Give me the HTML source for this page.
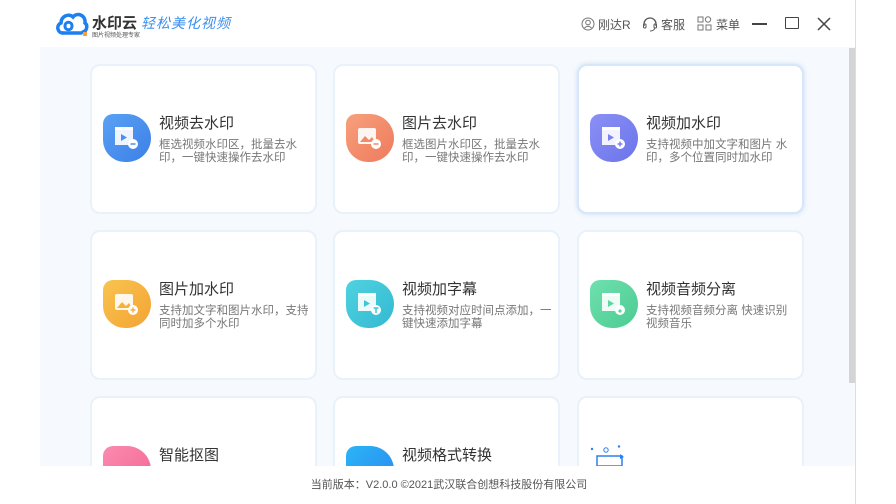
<!DOCTYPE html>
<html><head><meta charset="utf-8"><style>
*{margin:0;padding:0;box-sizing:border-box}
html,body{width:896px;height:504px;overflow:hidden}
body{background:#fff;font-family:"Liberation Sans","Noto Sans CJK SC",sans-serif;position:relative}
.win{position:absolute;left:0;top:0;width:856px;height:504px;background:#fff;border-right:1px solid #ddd;overflow:hidden}
.top{position:absolute;left:0;top:0;width:855px;height:47px;background:#fff}
.content{position:absolute;left:40px;top:47px;width:815px;height:419px;background:#f6f9fd;overflow:hidden}
.scroll{position:absolute;left:849px;top:48px;width:6px;height:335px;background:#d4d4d4}
.card{position:absolute;width:227px;height:150px;background:#fff;border:2px solid #e9f1fb;border-radius:10px}
.card.h{border-color:#d6e7fb;box-shadow:0 0 4px rgba(120,170,240,.35)}
.ic{position:absolute;left:11px;top:48px;width:48px;height:48px;border-radius:10px 24px 24px 22px}
.ic svg{position:absolute;left:10px;top:12px}
.t{position:absolute;left:67px;top:46px;font-size:15px;color:#333}
.d{position:absolute;left:67px;top:73px;width:150px;font-size:11.5px;line-height:13px;color:#777}
.footer{position:absolute;left:20px;top:466px;width:858px;height:38px;background:transparent;text-align:center;font-size:11px;color:#555;line-height:38px}
.fbg{position:absolute;left:0;top:466px;width:855px;height:38px;background:#fff}
.nav{position:absolute;top:16px;font-size:12px;color:#555}
</style></head><body>
<div class="win">
<div class="top">
 <svg style="position:absolute;left:55px;top:11px" width="34" height="26" viewBox="0 0 34 26"><path d="M8 22 C2 22 1 14 6 12 C6 5 14 2 18 6 C22 1 31 4 30 12 C33 14 32 20 28 21" fill="none" stroke="#1e7ff0" stroke-width="3.5" stroke-linecap="round"/><path d="M10 15 C10 10 17 10 17 15 C17 20 10 20 10 15Z" fill="none" stroke="#1e7ff0" stroke-width="3"/><path d="M8 22 H26" stroke="#1e7ff0" stroke-width="3.5" stroke-linecap="round"/><rect x="28" y="21" width="4" height="4" fill="#f4a13a"/></svg>
 <div style="position:absolute;left:92px;top:12px;font-size:15px;font-weight:bold;color:#333">水印云</div>
 <div style="position:absolute;left:92px;top:30px;font-size:6px;color:#555">图片视频处理专家</div>
 <div style="position:absolute;left:141px;top:13px;font-size:14px;color:#3a8ff0;font-style:italic;letter-spacing:1px">轻松美化视频</div>
 <svg style="position:absolute;left:581px;top:17px" width="14" height="14"><circle cx="7" cy="7" r="6" fill="none" stroke="#777"/><circle cx="7" cy="5.5" r="2.3" fill="none" stroke="#777"/><path d="M3.5 11 Q7 7.5 10.5 11" fill="none" stroke="#777"/></svg>
 <div class="nav" style="left:598px">刚达R</div>
 <svg style="position:absolute;left:642px;top:16px" width="16" height="16"><path d="M2 10 V8 A6 6 0 0 1 14 8 V10" fill="none" stroke="#555" stroke-width="1.3"/><rect x="1.5" y="8" width="2.5" height="4" rx="1" fill="none" stroke="#555"/><rect x="12" y="8" width="2.5" height="4" rx="1" fill="none" stroke="#555"/><path d="M13 12 Q12 15 8 15" fill="none" stroke="#555"/></svg>
 <div class="nav" style="left:661px">客服</div>
 <svg style="position:absolute;left:697px;top:16px" width="15" height="15"><rect x="1" y="1" width="5" height="5" fill="none" stroke="#777"/><circle cx="11" cy="3.5" r="2.7" fill="none" stroke="#777"/><rect x="1" y="9" width="5" height="5" fill="none" stroke="#777"/><rect x="9" y="9" width="5" height="5" fill="none" stroke="#777"/></svg>
 <div class="nav" style="left:716px">菜单</div>
 <div style="position:absolute;left:752px;top:23px;width:15px;height:2px;background:#444"></div>
 <div style="position:absolute;left:785px;top:17px;width:14px;height:12px;border:1.5px solid #444;border-radius:1px"></div>
 <svg style="position:absolute;left:817px;top:17px" width="14" height="14"><path d="M1 1 L13 13 M13 1 L1 13" stroke="#444" stroke-width="1.5"/></svg>
</div>
<div class="content">
 <div class="card" style="left:50px;top:17px"><div class="ic" style="background:linear-gradient(135deg,#5aa2f5,#3c7fe6)"><svg width="28" height="24"><rect x="2" y="4" width="18" height="15" fill="#fff" opacity=".9"/><rect x="2" y="1" width="18" height="3" fill="#fff"/><path d="M8 8 L14 11.5 L8 15Z" fill="#4a8ff0"/><circle cx="20" cy="18" r="5" fill="#fff"/><path d="M17.5 18 H22.5" stroke="#4a8ff0" stroke-width="1.5"/></svg></div><div class="t">视频去水印</div><div class="d">框选视频水印区，批量去水印，一键快速操作去水印</div></div>
 <div class="card" style="left:293px;top:17px"><div class="ic" style="background:linear-gradient(135deg,#f7a07c,#ee7a5c)"><svg width="28" height="24"><rect x="2" y="2" width="18" height="16" rx="2" fill="#fff" opacity=".9"/><path d="M4 16 L9 10 L13 14 L16 11 L19 16Z" fill="#f08a6a"/><circle cx="20" cy="18" r="5" fill="#fff"/><path d="M17.5 18 H22.5" stroke="#f08a6a" stroke-width="1.5"/></svg></div><div class="t">图片去水印</div><div class="d">框选图片水印区，批量去水印，一键快速操作去水印</div></div>
 <div class="card h" style="left:537px;top:17px"><div class="ic" style="background:linear-gradient(135deg,#8b90f5,#6b74ea)"><svg width="28" height="24"><rect x="2" y="4" width="18" height="15" fill="#fff" opacity=".9"/><rect x="2" y="1" width="18" height="3" fill="#fff"/><path d="M8 8 L14 11.5 L8 15Z" fill="#7b82f0"/><circle cx="20" cy="18" r="5" fill="#fff"/><path d="M17.5 18 H22.5 M20 15.5 V20.5" stroke="#7b82f0" stroke-width="1.5"/></svg></div><div class="t">视频加水印</div><div class="d">支持视频中加文字和图片 水印，多个位置同时加水印</div></div>
 <div class="card" style="left:50px;top:183px"><div class="ic" style="background:linear-gradient(135deg,#f9c34f,#f3a434)"><svg width="28" height="24"><rect x="2" y="2" width="18" height="16" rx="2" fill="#fff" opacity=".9"/><path d="M4 16 L9 10 L13 14 L16 11 L19 16Z" fill="#f5b03e"/><circle cx="20" cy="18" r="5" fill="#fff"/><path d="M17.5 18 H22.5 M20 15.5 V20.5" stroke="#f5b03e" stroke-width="1.5"/></svg></div><div class="t">图片加水印</div><div class="d">支持加文字和图片水印，支持同时加多个水印</div></div>
 <div class="card" style="left:293px;top:183px"><div class="ic" style="background:linear-gradient(135deg,#4fd3e0,#33b8d2)"><svg width="28" height="24"><rect x="2" y="4" width="18" height="15" fill="#fff" opacity=".9"/><rect x="2" y="1" width="18" height="3" fill="#fff"/><path d="M8 8 L14 11.5 L8 15Z" fill="#3ec6d8"/><circle cx="20" cy="18" r="5" fill="#fff"/><path d="M17.5 16 H22.5 M20 16 V21" stroke="#3ec6d8" stroke-width="1.5"/></svg></div><div class="t">视频加字幕</div><div class="d">支持视频对应时间点添加，一键快速添加字幕</div></div>
 <div class="card" style="left:537px;top:183px"><div class="ic" style="background:linear-gradient(135deg,#6fe0ae,#4ccb92)"><svg width="28" height="24"><rect x="2" y="4" width="18" height="15" fill="#fff" opacity=".9"/><rect x="2" y="1" width="18" height="3" fill="#fff"/><path d="M8 8 L14 11.5 L8 15Z" fill="#5fd6a0"/><circle cx="20" cy="18" r="5" fill="#fff"/><circle cx="20" cy="19" r="1.6" fill="#5fd6a0"/></svg></div><div class="t">视频音频分离</div><div class="d">支持视频音频分离 快速识别视频音乐</div></div>
 <div class="card" style="left:50px;top:349px"><div class="ic" style="background:linear-gradient(135deg,#fb8bb0,#f26593)"></div><div class="t">智能抠图</div></div>
 <div class="card" style="left:293px;top:349px"><div class="ic" style="background:linear-gradient(135deg,#2bb5f7,#2a86ee)"></div><div class="t">视频格式转换</div></div>
 <div class="card" style="left:537px;top:349px"><svg style="position:absolute;left:10px;top:47px" width="40" height="30"><circle cx="3" cy="4" r="1.2" fill="#2a80f0"/><circle cx="17" cy="5" r="2.2" fill="none" stroke="#2a80f0"/><circle cx="30" cy="1.5" r="1.2" fill="#2a80f0"/><rect x="8" y="11" width="25" height="10" fill="none" stroke="#2a80f0" stroke-width="1.5"/><path d="M31 9 L35 12 L31 14Z" fill="#2a80f0"/></svg><div style="position:absolute;left:67px;top:67px;font-size:11px;color:#888">▬ ▬ ▬ ▬ ▬ ▬ ▬</div></div>
</div>
<div class="scroll"></div>
<div class="fbg"></div>
<div class="footer">当前版本：V2.0.0 ©2021武汉联合创想科技股份有限公司</div>
</div>
</body></html>
